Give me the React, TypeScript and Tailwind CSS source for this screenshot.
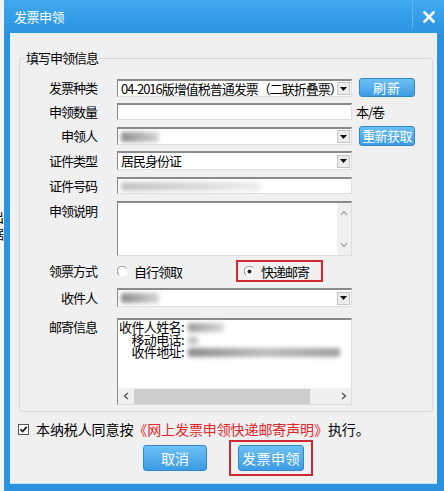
import React from 'react';

const cjk = "font-['Noto_Sans_CJK_SC',sans-serif]";

function Label({ children, lh }: { children: React.ReactNode; lh: string }) {
  return (
    <div className={`w-[77px] shrink-0 mr-[20px] text-right text-[13px] tracking-[-1px] text-black ${lh}`}>
      {children}
    </div>
  );
}

function Arrow() {
  return (
    <div className="w-[13px] h-[13px] mr-[1px] shrink-0 bg-[#ececec] border border-[#c4c4c4] flex items-center justify-center">
      <svg width="7" height="4" viewBox="0 0 7 4">
        <path d="M0 0h7L3.5 4z" fill="#111" />
      </svg>
    </div>
  );
}

function Field({ children, arrow, h }: { children?: React.ReactNode; arrow?: boolean; h: string }) {
  return (
    <div
      className={`w-[235px] ${h} flex items-center bg-white border-t-2 border-l border-t-[#8a8a8a] border-l-[#8a8a8a] border-r border-b border-r-[#dedede] border-b-[#dedede]`}
    >
      <div className="flex-1 min-w-0 h-full flex items-center overflow-hidden whitespace-nowrap pl-[3px] text-[13px] tracking-[-1px] text-black">
        {children}
      </div>
      {arrow && <Arrow />}
    </div>
  );
}

function BlueButton({ children, cls }: { children: React.ReactNode; cls: string }) {
  return (
    <div
      className={`${cls} flex items-center justify-center rounded-[3px] border border-[#2f88cf] bg-gradient-to-b from-[#6cc0f4] to-[#3c9be3] text-white whitespace-nowrap`}
    >
      {children}
    </div>
  );
}

function Blur({ cls }: { cls: string }) {
  return <div className={`${cls} blur-[2px] rounded-[2px]`} />;
}

function Radio({ checked }: { checked?: boolean }) {
  return (
    <svg width="11" height="11" viewBox="0 0 11 11" className="shrink-0">
      <circle cx="5.5" cy="5.5" r="5" fill="#fff" />
      <path d="M9.2 2.2A5 5 0 1 0 2.2 9.2" fill="none" stroke="#8a8a8a" strokeWidth="1" />
      {checked && <circle cx="5.5" cy="5.5" r="2" fill="#222" />}
    </svg>
  );
}

function Chevron({ d }: { d: string }) {
  return (
    <svg width="8" height="6" viewBox="0 0 8 6">
      <path d={d} fill="none" stroke="#a8a8a8" strokeWidth="1.3" />
    </svg>
  );
}

export default function App() {
  return (
    <div className={`w-[444px] h-[491px] flex overflow-hidden bg-[#f4f4f4] ${cjk}`}>
      {/* page behind the dialog */}
      <div className="w-[4px] shrink-0 overflow-hidden pt-[208px] text-[13px] leading-[17px] text-black">
        <div className="-ml-[9px]">出</div>
        <div className="-ml-[9px]">据</div>
      </div>

      {/* window */}
      <div className="flex-1 flex flex-col bg-[#2a92de]">
        <div className="h-[33px] shrink-0 flex items-center bg-gradient-to-b from-[#3fa8ef] to-[#2b95e2]">
          <div className="pl-[10px] text-[13px] tracking-[-0.5px] text-white leading-none">发票申领</div>
          <div className="flex-1" />
          <div className="w-px h-[28px] self-start bg-[#5fb6ee]" />
          <div className="w-[31px] flex items-center justify-center">
            <svg width="12" height="12" viewBox="0 0 12 12">
              <path d="M1.5 1.5l9 9M10.5 1.5l-9 9" stroke="#fff" strokeWidth="2.6" strokeLinecap="square" />
            </svg>
          </div>
        </div>

        <div className="flex-1 ml-[6px] mr-[7px] mb-[7px] bg-[#f0f0f0] border-b border-[#bfe6fb] flex flex-col">
          <fieldset className="mt-[16px] ml-[9px] mr-[4px] border border-[#d3d9de] rounded-[3px] pt-[11px] pb-[6px]">
            <legend className="ml-[5px] px-px text-[13px] tracking-[-1px] leading-[18px] text-black">填写申领信息</legend>

            <div className="flex flex-col">
              {/* 发票种类 */}
              <div className="flex h-[19px]">
                <Label lh="leading-[19px]">发票种类</Label>
                <div className="pt-px">
                  <Field arrow h="h-[18px]">
                    <span>04-2016版增值税普通发票（二联折叠票）</span>
                  </Field>
                </div>
                <BlueButton cls="ml-[7px] w-[56px] h-[19px] text-[13px]">
                  <span className="tracking-[1px]">刷新</span>
                </BlueButton>
              </div>

              {/* 申领数量 */}
              <div className="flex h-[17px] mt-[6px]">
                <Label lh="leading-[17px]">申领数量</Label>
                <Field h="h-[17px]" />
                <div className="ml-[4px] text-[13px] tracking-[-1px] leading-[17px] text-black">本/卷</div>
              </div>

              {/* 申领人 */}
              <div className="flex h-[20px] mt-[6px]">
                <Label lh="leading-[20px]">申领人</Label>
                <div className="pt-px">
                  <Field arrow h="h-[18px]">
                    <Blur cls="w-[38px] h-[10px] bg-gradient-to-r from-[#8c8c8c] to-[#d4d4d4]" />
                  </Field>
                </div>
                <BlueButton cls="ml-[7px] w-[56px] h-[20px] text-[13px]">
                  <span className="tracking-[-0.6px]">重新获取</span>
                </BlueButton>
              </div>

              {/* 证件类型 */}
              <div className="flex h-[19px] mt-[5px]">
                <Label lh="leading-[19px]">证件类型</Label>
                <Field arrow h="h-[19px]">居民身份证</Field>
              </div>

              {/* 证件号码 */}
              <div className="flex h-[17px] mt-[7px]">
                <Label lh="leading-[17px]">证件号码</Label>
                <Field h="h-[17px]">
                  <Blur cls="w-[140px] h-[9px] bg-gradient-to-r from-[#c4c4c4] via-[#d8d8d8] to-[#eeeeee]" />
                </Field>
              </div>

              {/* 申领说明 */}
              <div className="flex h-[55px] mt-[7px]">
                <Label lh="leading-[18px] pt-[1px]">申领说明</Label>
                <div className="w-[235px] h-full flex bg-white border-t-2 border-l border-t-[#8a8a8a] border-l-[#8a8a8a] border-r border-b border-r-[#dedede] border-b-[#dedede]">
                  <div className="flex-1" />
                  <div className="w-[14px] h-full bg-[#f0f0f0] flex flex-col items-center justify-between py-[7px]">
                    <Chevron d="M1 5l3-3.5L7 5" />
                    <Chevron d="M1 1l3 3.5L7 1" />
                  </div>
                </div>
              </div>

              {/* 领票方式 */}
              <div className="flex h-[22px] mt-[4px] items-center">
                <Label lh="leading-[22px]">领票方式</Label>
                <div className="flex items-center">
                  <Radio />
                  <span className="ml-[6px] text-[13px] tracking-[-1px] text-black leading-none">自行领取</span>
                </div>
                <div className="ml-[54px] h-[22px] w-[87px] border-2 border-[#cf2a33] flex items-center pl-[6px]">
                  <Radio checked />
                  <span className="ml-[6px] text-[13px] tracking-[-1px] text-black leading-none">快递邮寄</span>
                </div>
              </div>

              {/* 收件人 */}
              <div className="flex h-[19px] mt-[6px]">
                <Label lh="leading-[19px]">收件人</Label>
                <Field arrow h="h-[19px]">
                  <Blur cls="w-[38px] h-[10px] bg-gradient-to-r from-[#8c8c8c] to-[#d4d4d4]" />
                </Field>
              </div>

              {/* 邮寄信息 */}
              <div className="flex h-[87px] mt-[11px]">
                <Label lh="leading-[18px]">邮寄信息</Label>
                <div className="w-[235px] h-full flex flex-col bg-white border-t-2 border-l border-t-[#8a8a8a] border-l-[#8a8a8a] border-r border-b border-r-[#dedede] border-b-[#dedede]">
                  <div className="flex-1 flex pt-[1px] pl-px">
                    <div className="flex flex-col items-end pr-[4px] text-[13px] tracking-[-0.6px] leading-[12.5px] text-black">
                      <span>收件人姓名:</span>
                      <span>移动电话:</span>
                      <span>收件地址:</span>
                    </div>
                    <div className="flex flex-col pt-[2px] gap-[3.5px]">
                      <Blur cls="w-[36px] h-[9px] bg-gradient-to-r from-[#9a9a9a] to-[#dadada]" />
                      <Blur cls="w-[10px] h-[9px] bg-[#c8c8c8]" />
                      <Blur cls="w-[152px] h-[9px] bg-gradient-to-r from-[#8c8c8c] via-[#bdbdbd] to-[#a0a0a0]" />
                    </div>
                  </div>
                  <div className="h-[16px] bg-[#f0f0f0] flex items-center">
                    <div className="w-[16px] flex justify-center">
                      <svg width="6" height="8" viewBox="0 0 6 8">
                        <path d="M5 1L1.5 4 5 7" fill="none" stroke="#555" strokeWidth="1.4" />
                      </svg>
                    </div>
                    <div className="w-[176px] h-[15px] bg-[#cdcdcd]" />
                    <div className="flex-1 flex justify-end pr-[4px]">
                      <svg width="6" height="8" viewBox="0 0 6 8">
                        <path d="M1 1l3.5 3L1 7" fill="none" stroke="#555" strokeWidth="1.4" />
                      </svg>
                    </div>
                  </div>
                </div>
              </div>
            </div>
          </fieldset>

          {/* 同意声明 */}
          <div className="flex items-center h-[20px] mt-[7px] pl-[8px]">
            <svg width="11" height="11" viewBox="0 0 11 11" className="shrink-0">
              <rect x="0.5" y="0.5" width="10" height="10" fill="#fff" stroke="#555" />
              <path d="M2.3 5.2l2.2 2.3 4.2-4.6" fill="none" stroke="#111" strokeWidth="1.6" />
            </svg>
            <div className="ml-[7px] text-[14px] tracking-[-0.1px] leading-none whitespace-nowrap text-black">
              本纳税人同意按<span className="text-[#e0262b]">《网上发票申领快递邮寄声明》</span>执行。
            </div>
          </div>

          {/* buttons */}
          <div className="flex items-center mt-px pl-[133px]">
            <BlueButton cls="w-[64px] h-[26px] text-[14px]">取消</BlueButton>
            <div className="ml-[22px] h-[36px] border-2 border-[#cf2a33] flex items-center px-[7px]">
              <BlueButton cls="w-[66px] h-[26px] text-[14px]">
                <span className="tracking-[0.5px]">发票申领</span>
              </BlueButton>
            </div>
          </div>
        </div>
      </div>
    </div>
  );
}
